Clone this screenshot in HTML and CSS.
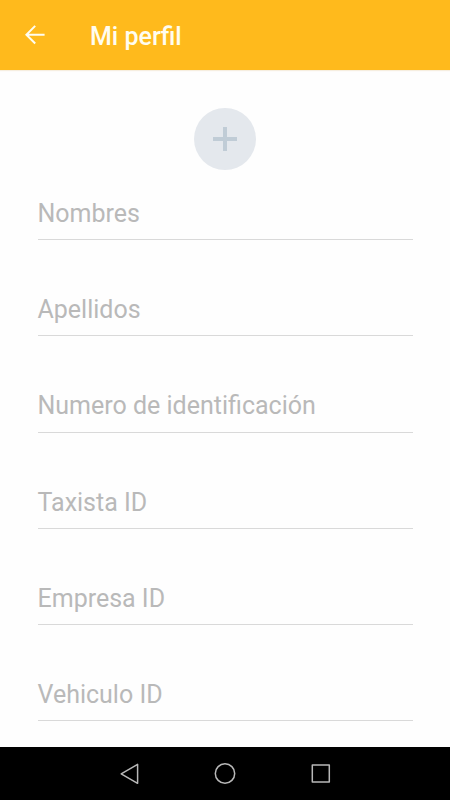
FILE: index.html
```
<!DOCTYPE html>
<html lang="es">
<head>
    <meta charset="UTF-8">
    <title>Mi perfil</title>
    <link rel="stylesheet" href="styles.css">
</head>
<body>
<div class="header">
    <svg class="back" viewBox="0 0 20 20">
        <path d="M10.2 0.9L1.4 9.7L10.2 18.5M1.4 9.7H19.6"/>
    </svg>
    <h1>Mi perfil</h1>
</div>

<div class="content">
    <div class="avatar">
        <svg viewBox="0 0 24 24">
            <path d="M12 0V24M0 12H24"/>
        </svg>
    </div>
    <ul class="form">
        <li>Nombres</li>
        <li>Apellidos</li>
        <li>Numero de identificación</li>
        <li>Taxista ID</li>
        <li>Empresa ID</li>
        <li>Vehiculo ID</li>
    </ul>
</div>

<div class="navbar">
    <svg viewBox="0 0 22 22">
        <path d="M18.6 1.3V20.3L2.2 10.8Z"/>
    </svg>
    <svg viewBox="0 0 22 22">
        <circle cx="11" cy="10.5" r="9.7"/>
    </svg>
    <svg viewBox="0 0 22 22">
        <rect x="2.3" y="2" width="17" height="17"/>
    </svg>
</div>
</body>
</html>
```

FILE: styles.css
```
*{padding: 0;margin: 0;box-sizing: border-box;}
body{
    height: 800px;
    display: flex;
    flex-direction: column;
    overflow: hidden;
    background-color: #fefefe;
    font-family: Roboto, sans-serif;
}

.header{
    height: 70px;
    flex: none;
    display: flex;
    align-items: center;
    padding-left: 24.5px;
    background-color: #ffba1c;
    box-shadow: 0 1px 1px #f6eee0;
}
.header .back{
    width: 20px;
    height: 20px;
    margin-right: 45.5px;
    fill: none;
    stroke: #fffdf0;
    stroke-width: 2;
}
.header h1{
    padding-top: 3px;
    font-size: 25px;
    line-height: 30px;
    font-weight: 500;
    color: #fffdf0;
}

.content{
    flex: 1;
    min-height: 0;
    padding: 38px 37.5px 0;
}
.avatar{
    width: 62px;
    height: 62px;
    margin: 0 auto;
    display: flex;
    align-items: center;
    justify-content: center;
    border-radius: 50%;
    background-color: #e4e8ed;
}
.avatar svg{
    width: 24px;
    height: 24px;
    stroke: #c0ccd6;
    stroke-width: 4;
}

.form{
    list-style: none;
    padding-top: 18px;
}
.form li{
    height: 52px;
    margin-bottom: 44.25px;
    padding-top: 10.9px;
    border-bottom: 1px solid #d9d9d9;
    font-size: 25px;
    line-height: 30px;
    color: #b9b9b9;
}

.navbar{
    height: 53px;
    flex: none;
    display: flex;
    justify-content: center;
    align-items: center;
    gap: 73.5px;
    background-color: #000;
}
.navbar svg{
    width: 22px;
    height: 22px;
    fill: none;
    stroke: #b8b8b8;
    stroke-width: 1.5;
    stroke-linejoin: round;
}
```
